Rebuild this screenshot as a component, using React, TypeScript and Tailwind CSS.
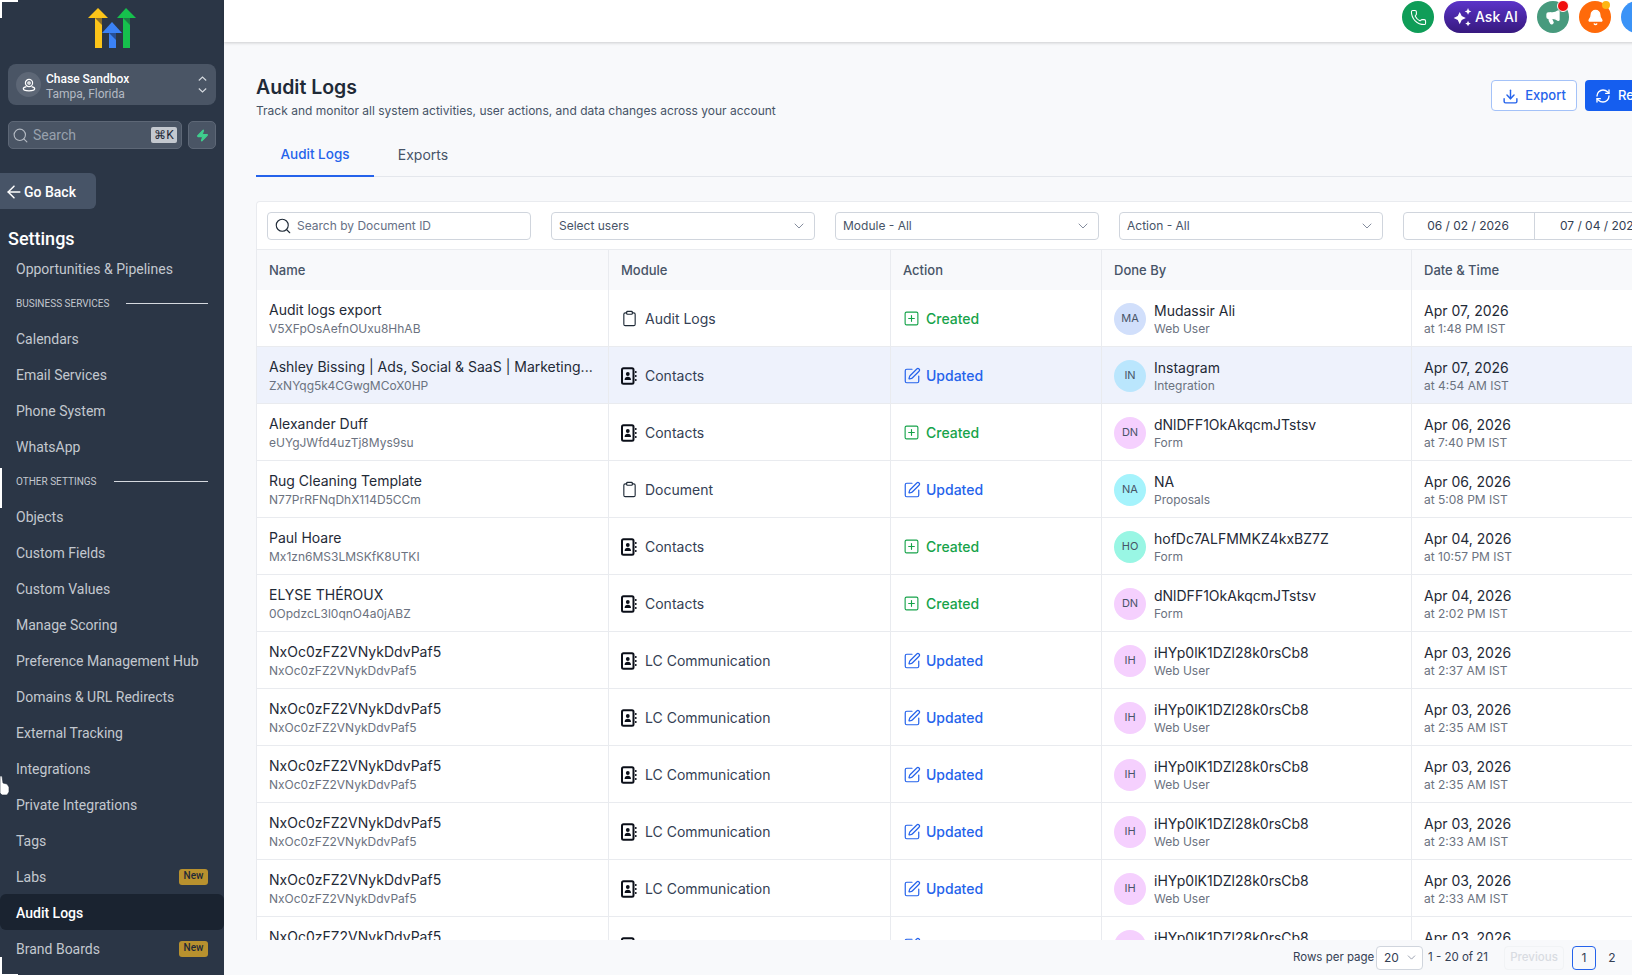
import React from 'react';
import { ArrowLeft, Bell, ChevronDown, Clipboard, Download, Megaphone, Phone, RefreshCw, Search, SquarePen, SquarePlus, Zap } from 'lucide-react';

type Row = {
  name: string;
  id: string;
  module: string;
  action: 'Created' | 'Updated';
  initials: string;
  avatar: string;
  by: string;
  role: string;
  date: string;
  time: string;
};

const lc = (time: string, date = 'Apr 03, 2026'): Row => ({
  name: 'NxOc0zFZ2VNykDdvPaf5',
  id: 'NxOc0zFZ2VNykDdvPaf5',
  module: 'LC Communication',
  action: 'Updated',
  initials: 'IH',
  avatar: 'bg-[#f5d0fe]',
  by: 'iHYp0lK1DZl28k0rsCb8',
  role: 'Web User',
  date,
  time,
});

const rows: Row[] = [
  { name: 'Audit logs export', id: 'V5XFpOsAefnOUxu8HhAB', module: 'Audit Logs', action: 'Created', initials: 'MA', avatar: 'bg-[#d1dffb]', by: 'Mudassir Ali', role: 'Web User', date: 'Apr 07, 2026', time: 'at 1:48 PM IST' },
  { name: 'Ashley Bissing | Ads, Social & SaaS | Marketing...', id: 'ZxNYqg5k4CGwgMCoX0HP', module: 'Contacts', action: 'Updated', initials: 'IN', avatar: 'bg-[#bae6fd]', by: 'Instagram', role: 'Integration', date: 'Apr 07, 2026', time: 'at 4:54 AM IST' },
  { name: 'Alexander Duff', id: 'eUYgJWfd4uzTj8Mys9su', module: 'Contacts', action: 'Created', initials: 'DN', avatar: 'bg-[#f5d0fe]', by: 'dNlDFF1OkAkqcmJTstsv', role: 'Form', date: 'Apr 06, 2026', time: 'at 7:40 PM IST' },
  { name: 'Rug Cleaning Template', id: 'N77PrRFNqDhX114D5CCm', module: 'Document', action: 'Updated', initials: 'NA', avatar: 'bg-[#a5f3fc]', by: 'NA', role: 'Proposals', date: 'Apr 06, 2026', time: 'at 5:08 PM IST' },
  { name: 'Paul Hoare', id: 'Mx1zn6MS3LMSKfK8UTKI', module: 'Contacts', action: 'Created', initials: 'HO', avatar: 'bg-[#99f6e4]', by: 'hofDc7ALFMMKZ4kxBZ7Z', role: 'Form', date: 'Apr 04, 2026', time: 'at 10:57 PM IST' },
  { name: 'ELYSE THÉROUX', id: '0OpdzcL3l0qnO4a0jABZ', module: 'Contacts', action: 'Created', initials: 'DN', avatar: 'bg-[#f5d0fe]', by: 'dNlDFF1OkAkqcmJTstsv', role: 'Form', date: 'Apr 04, 2026', time: 'at 2:02 PM IST' },
  lc('at 2:37 AM IST'),
  lc('at 2:35 AM IST'),
  lc('at 2:35 AM IST'),
  lc('at 2:33 AM IST'),
  lc('at 2:33 AM IST'),
  lc('at 2:33 AM IST'),
];

const Logo = () => (
  <svg width="48" height="40" viewBox="0 0 48 40" fill="none">
    <path d="M7 9h7v31H7z" fill="#fcc419" />
    <path d="M0 10 10 0l10 10z" fill="#fcc419" />
    <path d="M7 10h7v7z" fill="#8a6d2a" />
    <path d="M21 24h7v16h-7z" fill="#3b82f6" />
    <path d="M14 25l10-11 10 11z" fill="#3b82f6" />
    <path d="M21 25h7v7z" fill="#274f96" />
    <path d="M35 9h7v31h-7z" fill="#16c04d" />
    <path d="M29 10 38 0l10 10z" fill="#16c04d" />
    <path d="M35 10h7v7z" fill="#1d7a45" />
  </svg>
);

const ContactBook = () => (
  <svg width="16" height="18" viewBox="0 0 16 18" fill="none" className="shrink-0 mr-px">
    <rect x="1" y="1.2" width="11.5" height="15.600" rx="1.500" stroke="#0b0f19" strokeWidth="2" />
    <circle cx="6.800" cy="7" r="1.900" fill="#0b0f19" />
    <path d="M3.600 13c0-2 1.400-3.200 3.200-3.200S10 11 10 13z" fill="#0b0f19" />
    <path d="M14.800 4v2M14.800 8v2M14.800 12v2" stroke="#0b0f19" strokeWidth="1.400" />
  </svg>
);

const AiStars = () => (
  <svg width="21" height="21" viewBox="0 0 19 19" fill="white">
    <path d="M7 4.500 8.800 8.200 12.500 10 8.800 11.800 7 15.500 5.200 11.800 1.500 10 5.200 8.200z" />
    <path d="M14.500 1 15.400 3.100 17.500 4 15.400 4.900 14.500 7 13.600 4.900 11.500 4 13.600 3.100z" />
    <path d="M14.500 12.500 15.300 14.200 17 15 15.300 15.800 14.500 17.500 13.700 15.800 12 15 13.700 14.200z" />
  </svg>
);

const SideItem = ({ label, active, isNew }: { label: string; active?: boolean; isNew?: boolean }) => (
  <div className={`h-9 flex items-center justify-between pl-4 pr-[16px] pt-px text-sm rounded-md ${active ? 'bg-[#1a2330] text-white font-medium' : 'text-[#c3c8cf]'}`}>
    <span>{label}</span>
    {isNew && <span className="h-4 w-[29px] flex items-center justify-center rounded-[3px] bg-[#b8912e] text-[10px] font-medium text-[#1f2937]">New</span>}
  </div>
);

const SideLabel = ({ label }: { label: string }) => (
  <div className="h-[34px] flex items-center gap-[17px] pl-4 pr-4 text-[10px] uppercase text-[#c3c8cf]">
    <span className="whitespace-nowrap">{label}</span>
    <span className="flex-1 h-px bg-[#d5d9df]" />
  </div>
);

const Sidebar = () => (
  <aside className="w-[224px] shrink-0 h-full bg-[#2b3646] overflow-hidden font-['Roboto',sans-serif]">
    <div className="pt-2 flex justify-center">
      <Logo />
    </div>
    <div className="mt-4 mx-2 h-[41px] rounded-lg bg-[#4a5565] flex items-center pl-2 pr-[9px]">
      <div className="w-[25px] h-[25px] rounded-full bg-[#5d6776] flex items-center justify-center shrink-0">
        <svg width="14" height="14" viewBox="0 0 14 14" fill="none" stroke="white" strokeWidth="1.200">
          <circle cx="7" cy="5" r="3.600" />
          <circle cx="7" cy="5" r="1.200" />
          <path d="M4.400 8.600C2.600 9 1.300 9.800 1.300 10.800c0 1.200 2.500 2 5.700 2s5.700-.8 5.700-2c0-1-1.300-1.800-3.100-2.200" />
        </svg>
      </div>
      <div className="ml-[5px] flex-1 pt-1">
        <div className="text-xs leading-[15px] font-medium text-white">Chase Sandbox</div>
        <div className="text-xs leading-[14px] text-[#b4bac3]">Tampa, Florida</div>
      </div>
      <svg width="9" height="17" viewBox="0 0 9 17" fill="none" stroke="#d5d9df" strokeWidth="1.100">
        <path d="M.8 4.500 4.500 1l3.700 3.500M.8 12.500 4.500 16l3.700-3.500" />
      </svg>
    </div>
    <div className="mt-4 mx-2 flex gap-[6px]">
      <div className="h-[28px] w-[174px] rounded-[5px] bg-[#4a5565] border border-[#5d6776] flex items-center pl-[3px] pr-[4px]">
        <Search size={17} strokeWidth={1.600} className="text-[#b4bac3]" />
        <span className="ml-[4px] flex-1 text-sm text-[#98a1ad]">Search</span>
        <span className="h-4 w-[26px] rounded-[2px] bg-[#c3c8cf] text-xs leading-4 text-center text-[#1f2937]">⌘K</span>
      </div>
      <div className="h-[28px] w-[28px] rounded-[5px] bg-[#4a5565] border border-[#5d6776] flex items-center justify-center">
        <Zap size={13} className="text-[#3fcf8e] fill-[#3fcf8e]" />
      </div>
    </div>
    <div className="mt-6 h-9 w-24 rounded-r-md bg-[#475467] flex items-center pl-1 pt-px text-sm font-medium text-white">
      <ArrowLeft size={20} strokeWidth={1.800} />
      <span>Go Back</span>
    </div>
    <div className="mt-4 h-[25px] pl-2 text-lg leading-[28px] font-medium text-white">Settings</div>
    <SideItem label="Opportunities & Pipelines" />
    <SideLabel label="Business Services" />
    <SideItem label="Calendars" />
    <SideItem label="Email Services" />
    <SideItem label="Phone System" />
    <SideItem label="WhatsApp" />
    <SideLabel label="Other Settings" />
    <SideItem label="Objects" />
    <SideItem label="Custom Fields" />
    <SideItem label="Custom Values" />
    <SideItem label="Manage Scoring" />
    <SideItem label="Preference Management Hub" />
    <SideItem label="Domains & URL Redirects" />
    <SideItem label="External Tracking" />
    <SideItem label="Integrations" />
    <SideItem label="Private Integrations" />
    <SideItem label="Tags" />
    <SideItem label="Labs" isNew />
    <SideItem label="Audit Logs" active />
    <SideItem label="Brand Boards" isNew />
  </aside>
);

const TopBar = () => (
  <header className="h-[42px] shrink-0 bg-white shadow-[0_1px_3px_rgba(0,0,0,0.18)] flex justify-end items-start pt-px pr-[61px] gap-[10px] relative z-10">
    <div className="w-8 h-8 rounded-full bg-[#0f9d58] flex items-center justify-center">
      <Phone size={17} strokeWidth={1.500} className="text-white" />
    </div>
    <div className="w-[83px] h-8 rounded-full bg-gradient-to-b from-[#5b34c9] to-[#37197f] flex items-center pl-[8px] gap-[2px] text-sm font-medium text-white">
      <AiStars />
      <span>Ask AI</span>
    </div>
    <div className="relative w-8 h-8 rounded-full bg-[#479a7d] flex items-center justify-center">
      <Megaphone size={16} className="text-white fill-white" />
      <span className="absolute -top-[1px] right-0 w-3 h-3 rounded-full bg-[#f00f0f] border border-white" />
    </div>
    <div className="relative w-8 h-8 rounded-full bg-[#ff6a0a] flex items-center justify-center">
      <Bell size={17} className="text-white fill-white" />
      <span className="absolute top-0 right-[1px] w-2 h-2 rounded-full bg-[#fdb515]" />
    </div>
    <div className="w-8 h-8 rounded-full bg-[#3b93f7]" />
  </header>
);

const Filter = ({ label }: { label: string }) => (
  <div className="w-[264px] h-[28px] rounded bg-white border border-[#d0d5dd] flex items-center justify-between pl-[7px] pr-[7px] text-xs text-[#475467]">
    <span>{label}</span>
    <ChevronDown size={16} strokeWidth={1.200} className="text-[#667085]" />
  </div>
);

const gridCols = 'grid grid-cols-[351px_282px_211px_310px_1fr]';

const TableRow = ({ row, highlight }: { row: Row; highlight: boolean }) => (
  <div className={`${gridCols} h-[57px] border-b border-[#e9ebef] ${highlight ? 'bg-[#eef2fc]' : 'bg-white'}`}>
    <div className="pl-3 pr-2 pt-px flex flex-col justify-center">
      <div className="text-sm leading-5 text-[#1f2a37] truncate">{row.name}</div>
      <div className="text-xs leading-[18px] text-[#6b7280]">{row.id}</div>
    </div>
    <div className="border-l border-[#e9ebef] pl-3 pt-px flex items-center gap-[7px] text-sm text-[#344054]">
      {row.module === 'Audit Logs' || row.module === 'Document' ? (
        <Clipboard size={17} strokeWidth={1.600} className="text-[#1f2a37] shrink-0" />
      ) : (
        <ContactBook />
      )}
      <span>{row.module}</span>
    </div>
    <div className="border-l border-[#e9ebef] pl-[12px] pt-px flex items-center text-sm font-medium">
      {row.action === 'Created' ? (
        <span className="flex items-center gap-[6px] text-[#16a34a]">
          <SquarePlus size={17} strokeWidth={1.600} />
          Created
        </span>
      ) : (
        <span className="flex items-center gap-[5px] text-[#2563eb]">
          <SquarePen size={18} strokeWidth={1.600} />
          Updated
        </span>
      )}
    </div>
    <div className="border-l border-[#e9ebef] pl-3 pt-px flex items-center gap-2">
      <div className={`w-8 h-8 rounded-full ${row.avatar} flex items-center justify-center text-[11px] text-[#475467]`}>{row.initials}</div>
      <div>
        <div className="text-sm leading-5 text-[#1f2a37]">{row.by}</div>
        <div className="text-xs leading-[16px] text-[#6b7280]">{row.role}</div>
      </div>
    </div>
    <div className="border-l border-[#e9ebef] pl-3 pt-px flex flex-col justify-center">
      <div className="text-sm leading-5 text-[#1f2a37]">{row.date}</div>
      <div className="text-xs leading-[16px] text-[#6b7280]">{row.time}</div>
    </div>
  </div>
);

const HeaderCell = ({ label, first }: { label: string; first?: boolean }) => (
  <div className={`flex items-center pt-px text-[13px] font-medium text-[#475467] ${first ? 'pl-3' : 'pl-3 border-l border-[#e9ebef]'}`}>{label}</div>
);

const Footer = () => (
  <div className="h-[35px] shrink-0 bg-[#f8f9fb] flex items-center pl-[1069px] text-[11.5px] text-[#344054] relative">
    <span className="w-[83px] whitespace-nowrap">Rows per page</span>
    <div className="w-[47px] h-[24px] rounded border border-[#d0d5dd] bg-white flex items-center pl-[7px] gap-[6px] text-xs">
      20
      <ChevronDown size={13} strokeWidth={1.200} className="text-[#667085]" />
    </div>
    <span className="ml-[5px] w-[76px] whitespace-nowrap">1 - 20 of 21</span>
    <div className="w-[60px] h-[24px] rounded border border-[#f1f3f5] text-[#d8dce2] font-medium flex items-center justify-center">Previous</div>
    <div className="ml-2 w-6 h-6 rounded border border-[#2563eb] bg-[#f8f9fb] flex items-center justify-center text-xs">1</div>
    <div className="ml-[4px] w-6 h-6 flex items-center justify-center text-xs">2</div>
  </div>
);

const Content = () => (
  <main className="w-[1490px] shrink-0 h-full flex flex-col bg-[#f8f9fb] font-['Inter',sans-serif]">
    <TopBar />
    <div className="flex-1 min-h-0 flex flex-col pl-8 pr-8">
      <div className="mt-[31px] h-[46px] flex items-start justify-between">
        <div>
          <h1 className="text-[19.5px] leading-7 font-semibold text-[#1f2a37]">Audit Logs</h1>
          <p className="pt-px text-xs leading-[18px] text-[#475467]">Track and monitor all system activities, user actions, and data changes across your account</p>
        </div>
        <div className="flex gap-2 mt-[7px]">
          <div className="w-[86px] h-[31px] pt-px rounded border border-[#a4c2f8] bg-white flex items-center justify-center gap-[6px] text-[13px] font-medium text-[#2563eb]">
            <Download size={17} />
            Export
          </div>
          <div className="w-[97px] h-[31px] pl-[10px] rounded bg-[#155eef] flex items-center gap-[7px] text-[13px] font-medium text-white">
            <RefreshCw size={16} />
            Refresh
          </div>
        </div>
      </div>
      <div className="mt-[21px] h-[37px] shrink-0 flex border-b border-[#e4e7ec] text-sm">
        <div className="w-[118px] h-[37px] pb-[6px] flex items-center justify-center text-[13.5px] font-medium text-[#2563eb] border-b-2 border-[#2563eb]">Audit Logs</div>
        <div className="w-[98px] pb-[6px] flex items-center justify-center text-[#475467]">Exports</div>
      </div>
      <div className="mt-6 flex-1 min-h-0 overflow-hidden border border-[#e9ebef] border-b-0 rounded-t bg-white">
        <div className="h-[48px] pt-[10px] pl-[10px] flex gap-5 border-b border-[#e9ebef]">
          <div className="w-[264px] h-[28px] rounded bg-white border border-[#d0d5dd] flex items-center pl-[6px] gap-[5px] text-xs text-[#667085]">
            <Search size={18} strokeWidth={1.500} className="text-[#1f2a37]" />
            Search by Document ID
          </div>
          <Filter label="Select users" />
          <Filter label="Module - All" />
          <Filter label="Action - All" />
          <div className="w-[266px] h-[28px] rounded border border-[#d0d5dd] flex text-xs text-[#344054]">
            <div className="w-[131px] pr-[2px] flex items-center justify-center border-r border-[#d0d5dd]">06 / 02 / 2026</div>
            <div className="flex-1 pr-[2px] flex items-center justify-center">07 / 04 / 2026</div>
          </div>
        </div>
        <div className={`${gridCols} h-10 bg-[#f8f9fb]`}>
          <HeaderCell label="Name" first />
          <HeaderCell label="Module" />
          <HeaderCell label="Action" />
          <HeaderCell label="Done By" />
          <HeaderCell label="Date & Time" />
        </div>
        {rows.map((row, i) => (
          <TableRow key={i} row={row} highlight={i === 1} />
        ))}
      </div>
    </div>
    <Footer />
  </main>
);

// capture marks and pointer that sit on top of the screenshot
const Overlays = () => (
  <>
    <div className="absolute left-0 top-0 w-[18px] h-[18px] border-l-2 border-t-2 border-white" />
    <div className="absolute left-0 bottom-0 w-[18px] h-[18px] border-l-2 border-b border-white" />
    <div className="absolute left-0 top-[468px] w-[2px] h-[40px] bg-white" />
    <svg className="absolute left-0 top-[776px]" width="10" height="20" viewBox="0 0 10 20">
      <path d="M0 0h2l1 7 4 1 2 3v5l-2 3H2L0 17z" fill="white" stroke="#1f2937" strokeWidth="0.6" />
    </svg>
  </>
);

export default function App() {
  return (
    <div className="relative w-screen h-screen flex overflow-hidden">
      <Sidebar />
      <Content />
      <Overlays />
    </div>
  );
}
